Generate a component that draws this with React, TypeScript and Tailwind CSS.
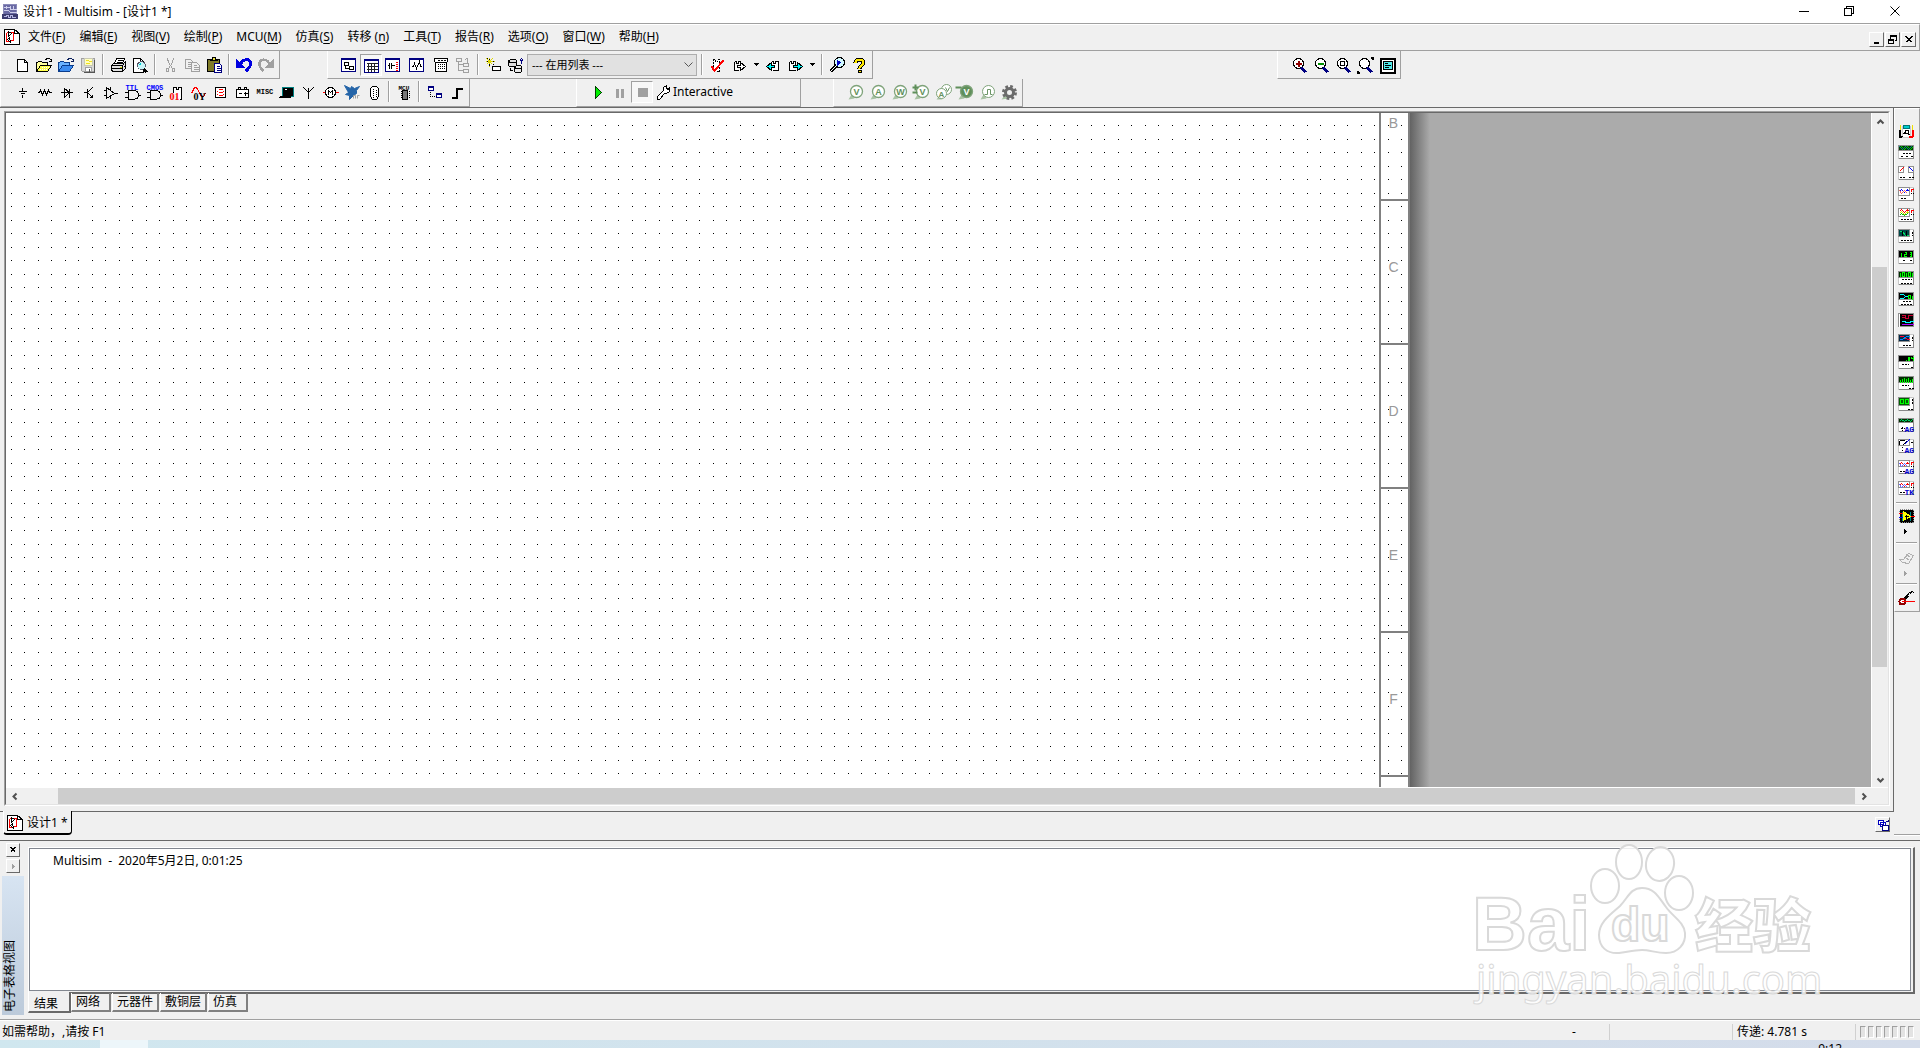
import type { ReactNode } from "react";

/* ---------- icon helpers ---------- */

// 16px grid shifted by half a pixel, so whole coordinates are pixel centres
const Pic = ({ children, w = 16, h = 16, smooth = false }: { children: ReactNode; w?: number; h?: number; smooth?: boolean }) => (
    <svg
        width={w}
        height={h}
        viewBox={`-0.5 -0.5 ${w} ${h}`}
        fill="none"
        stroke="#000"
        shapeRendering={smooth ? "auto" : "crispEdges"}
        className="shrink-0 overflow-visible"
        aria-hidden="true"
    >
        {children}
    </svg>
);

const ToolButton = ({ label, children, pressed = false }: { label: string; children: ReactNode; pressed?: boolean }) => (
    <button
        type="button"
        aria-label={label}
        className={
            pressed
                ? "w-[22px] h-[22px] shrink-0 flex items-center justify-center bg-[#f7f7f7] border border-t-[#a0a0a0] border-l-[#a0a0a0] border-r-white border-b-white"
                : "w-[22px] h-[22px] shrink-0 flex items-center justify-center"
        }
    >
        {children}
    </button>
);

const Divider = () => <div className="w-0.5 h-[21px] mx-[3px] shrink-0 border-l border-l-[#a0a0a0] border-r border-r-white"></div>;

const Caret = () => (
    <button type="button" aria-label="更多" className="w-3 h-[22px] flex items-center justify-center">
        <Pic w={5} h={3}><path d="M0 0h4l-2 2z" fill="#000" /></Pic>
    </button>
);

const Toolbar = ({ children, className = "" }: { children: ReactNode; className?: string }) => (
    <div className={`h-7 flex items-center pl-[10px] pr-0.5 border-l border-l-white border-r border-r-[#a0a0a0] border-b border-b-[#a0a0a0] ${className}`}>
        {children}
    </div>
);

const icons = {
    newFile: <Pic><path d="M3 2h7l3 3v9H3zM10 2v3h3" fill="#fff" /></Pic>,
    open: (
        <Pic>
            <path d="M0 13V5h1l1-1h3l1 1h5v3" fill="#ffff9c" />
            <path d="M0 14l4-6h11l-4 6z" fill="#ffff4a" />
            <path d="M3 12h8M5 10h8" stroke="#fff" strokeDasharray="1 1" />
            <path d="M9 3l1-2h3l2 2M15 1v3h-3" />
        </Pic>
    ),
    samples: (
        <Pic>
            <path d="M0 13V5h1l1-1h3l1 1h5v3" fill="#6cb4ff" stroke="#0a3c8c" />
            <path d="M0 14l4-6h11l-4 6z" fill="#3c8cf0" stroke="#0a3c8c" />
            <path d="M9 3l1-2h3l2 2M15 1v3h-3" stroke="#0a1e5a" />
        </Pic>
    ),
    save: (
        <Pic>
            <path d="M1 1h13v13H2l-1-1z" fill="#d8d8d8" stroke="#a0a0a0" />
            <path d="M4 1h8v7H4z" fill="#ffffc0" stroke="#c8c8b4" />
            <path d="M5 3h3M8 4h3M5 6h4" stroke="#f0e020" />
            <path d="M5 10h6v4H5z" fill="#fff" stroke="#a0a0a0" />
            <path d="M9 11v3M14 2v13M3 15h11" stroke="#555" />
        </Pic>
    ),
    print: (
        <Pic>
            <path d="M4 6l2-5h8l-2 5z" fill="#fff" />
            <path d="M7 3h5M6 5h5" />
            <path d="M1 8l2-2h10l2-2v7l-3 3H2l-1-2z" fill="#e0e0e0" />
            <path d="M1 8h11v5M1 11h11M13 6v1M15 8l-2 2" />
            <path d="M9 10h2" stroke="#d0d000" />
        </Pic>
    ),
    preview: (
        <Pic>
            <path d="M1 1h7l3 3v11H1z" fill="#fff" />
            <path d="M8 1v3h3" />
            <circle cx="9" cy="8" r="4" fill="#c8f4f8" stroke="#556" />
            <path d="M7 7l2-1" stroke="#0cc" />
            <path d="M12 11l3 4M11 12l3 3" strokeWidth="1.5" />
        </Pic>
    ),
    cut: (
        <Pic>
            <g stroke="#a0a0a0">
                <path d="M5 1l1 4 4 6M11 1l-1 4-4 6" />
                <path d="M4 11h2v3H4zM10 11h2v3h-2z" />
            </g>
        </Pic>
    ),
    copy: (
        <Pic>
            <g stroke="#a0a0a0">
                <path d="M1 2h5l2 2v7H1zM3 5h3M3 7h4M3 9h4" />
                <path d="M7 5h5l3 3v6H7z" fill="#f0f0f0" />
                <path d="M9 8h3M9 10h5M9 12h5" />
            </g>
        </Pic>
    ),
    paste: (
        <Pic>
            <path d="M1 2h12v12H1z" fill="#807c28" />
            <path d="M4 3h7l-1-1H9V0H6v2H5z" fill="#e8e040" />
            <path d="M8 6h5l2 2v7H8z" fill="#fff" stroke="#000080" />
            <path d="M10 9h3M10 11h4M10 13h4" stroke="#000080" />
        </Pic>
    ),
    undo: (
        <Pic>
            <path d="M4 7c2-6 9-6 10-2 1 4-2 6-5 9" stroke="#0000e0" strokeWidth="3" />
            <path d="M0 2v8h8z" fill="#0000e0" stroke="#0000e0" />
        </Pic>
    ),
    redo: (
        <Pic>
            <path d="M11 7c-2-6-9-6-10-2-1 4 2 6 4 9" stroke="#a0a0a0" strokeWidth="2.5" />
            <path d="M15 2v8H7z" fill="#a0a0a0" stroke="#a0a0a0" />
        </Pic>
    ),
    toolbox: (
        <Pic>
            <path d="M0 1h14v13H0z" fill="#fff" stroke="#000080" />
            <path d="M0 2h14" stroke="#000080" />
            <path d="M3 5h4v3H3zM4 8v3h4M8 9h4v3H8z" />
        </Pic>
    ),
    sheet: (
        <Pic>
            <path d="M1 2h14v13H1z" fill="#fff" stroke="#000080" />
            <path d="M1 3h14" stroke="#000080" />
            <path d="M3 6h11M3 9h11M3 12h11M5 5v9M8 5v9M11 5v9" stroke="#222" />
        </Pic>
    ),
    database: (
        <Pic>
            <path d="M0 1h14v13H0z" fill="#fff" stroke="#000080" />
            <path d="M0 2h14" stroke="#000080" />
            <path d="M2 8h2M4 5v6M6 5v6M6 8h3" />
            <path d="M12 4v10M11 4v10" stroke="#f00" strokeDasharray="1 1" />
        </Pic>
    ),
    grapher: (
        <Pic>
            <path d="M0 1h14v13H0z" fill="#fff" stroke="#000080" />
            <path d="M0 2h14" stroke="#000080" />
            <path d="M2 9h2l1-3 2 5 3-7 1 5h1" />
        </Pic>
    ),
    postproc: (
        <Pic>
            <path d="M1 1h13v3l-1 1v9H2V5L1 4zM2 5h11" fill="#fff" />
            <path d="M4 3h8" strokeDasharray="2 1" />
            <path d="M4 7h8M4 9h8M4 11h8" strokeDasharray="1 1" />
        </Pic>
    ),
    parent: (
        <Pic>
            <g stroke="#a0a0a0">
                <path d="M1 1h5v3H1zM3 4v9M3 7h4M3 13h4M8 6h5v3H8zM8 12h5v3H8zM11 1h1v4M9 3l2-2 2 2" />
            </g>
        </Pic>
    ),
    create: (
        <Pic>
            <path d="M4 0v9M0 4h9M1 1l6 6M7 1L1 7" stroke="#e0d800" />
            <path d="M4 1v1M4 6v2M1 4h1M7 4h1M1 1h1M7 7h1" />
            <path d="M7 9h8v4H7z" fill="#fff" />
        </Pic>
    ),
    dbManager: (
        <Pic>
            <path d="M1 3h1l1-1h5l1 1v5l-1 1H2L1 8z" fill="#ddd" />
            <path d="M1 4l2 1h5l1-1M7 9h1l1-1h4l1 1v5l-1 1H8l-1-1zM7 10l2 1h4l1-1M3 10v3h2" fill="#e8e8e8" />
            <path d="M14 6V2M12 4l2-3 2 3" stroke="#000080" />
        </Pic>
    ),
    check: (
        <Pic>
            <path d="M4 12V2h2v2h2V2h2v12H7" strokeDasharray="2 1" fill="#fff" />
            <path d="M2 9l3 4 9-10" stroke="#f00" strokeWidth="2" />
        </Pic>
    ),
    transfer: (
        <Pic>
            <path d="M3 4v9h4M3 4h2v2h2V4h2v4" fill="#fff" />
            <path d="M6 8h3V5l5 4-5 4v-3H6z" fill="#fff" />
        </Pic>
    ),
    backAnnotate: (
        <Pic>
            <path d="M6 4h2v2h2V4h3v9H7" fill="#fff" />
            <path d="M9 8H6V5L1 9l5 4v-3h3z" fill="#0ff" />
        </Pic>
    ),
    forward: (
        <Pic>
            <path d="M2 4v9h6M2 4h2v2h2V4h2v5" fill="#fff" />
            <path d="M6 8h4V5l5 4-5 4v-3H6z" fill="#0ff" />
        </Pic>
    ),
    find: (
        <Pic>
            <circle cx="10" cy="5" r="5" fill="#d0f8ff" />
            <path d="M8 3l3 2-3 3z" fill="#0000c0" stroke="#0000c0" />
            <path d="M6 9l-5 5" strokeWidth="3" />
            <path d="M6 9l-5 5" stroke="#fff" />
        </Pic>
    ),
    help: (
        <Pic>
            <path d="M4 5c0-4 8-4 8 0 0 3-4 3-4 6" stroke="#000" strokeWidth="4" />
            <path d="M4 5c0-4 8-4 8 0 0 3-4 3-4 6" stroke="#ffe800" strokeWidth="2" />
            <path d="M7 13h3v2H7z" fill="#ffe800" />
        </Pic>
    ),
    ground: <Pic><path d="M8 3v4M4 7h8M6 9h4M8 10v3" /></Pic>,
    resistor: <Pic><path d="M1 8h2l1-2 2 4 2-4 2 4 2-4 1 2h2" /></Pic>,
    diode: <Pic><path d="M2 8h12M6 4v9l5-5zM11 4v9" /></Pic>,
    transistor: <Pic><path d="M3 8h4M7 4v9M12 3L7 8l5 5M12 10v3H9" /></Pic>,
    opamp: <Pic><path d="M4 3v11l8-5zM1 6h3M1 11h3M12 9h3M8 2v4M8 11v3" /></Pic>,
    ttl: (
        <Pic>
            <text x="1" y="5" stroke="none" fill="#0000ff" className="text-[7px] font-bold font-['Liberation_Mono']">TTL</text>
            <path d="M4 6h5c7 1 7 8 0 9H4zM0 8h4M0 13h4M13 11h3" />
        </Pic>
    ),
    cmos: (
        <Pic>
            <text x="0" y="5" stroke="none" fill="#0000ff" className="text-[7px] font-bold font-['Liberation_Mono']">CMOS</text>
            <path d="M4 6h5c7 1 7 8 0 9H4zM0 8h4M0 13h4M13 11h3" />
        </Pic>
    ),
    digital: (
        <Pic>
            <path d="M5 8V3h3v2h2V3h3v12h-2" fill="#fff" />
            <text x="1" y="15" stroke="none" fill="#f00" className="text-[10px] font-bold font-['Liberation_Serif']">01</text>
        </Pic>
    ),
    mixed: (
        <Pic>
            <path d="M1 9l3-6h2l5 9h2l2-3" stroke="#f00" />
            <text x="3" y="15" stroke="none" fill="#000" className="text-[10px] font-bold font-['Liberation_Serif']">0Y</text>
        </Pic>
    ),
    indicator: (
        <Pic>
            <path d="M3 3h10v10H3z" fill="#fff" />
            <path d="M6 5h4M6 8h4M6 11h4M5 6v1M11 6v1M5 9v1M11 9v1" stroke="#f00" />
        </Pic>
    ),
    power: <Pic><path d="M2 5h12v8H2zM4 5V3h2v2M10 5V3h2v2M4 9h3M9 9h4M11 7v4" fill="#fff" /></Pic>,
    misc: <Pic><text x="0" y="9" stroke="none" fill="#000" className="text-[7px] font-bold font-['Liberation_Mono']">MISC</text></Pic>,
    peripherals: (
        <Pic>
            <path d="M4 3h11v9H4z" fill="#000" stroke="#008080" />
            <path d="M1 12h11M0 13h12" />
            <path d="M6 5h2" stroke="#fff" />
        </Pic>
    ),
    rf: <Pic><path d="M8 3v11M3 3l5 5 5-5" /></Pic>,
    electromech: (
        <Pic>
            <path d="M0 8h3M13 8h3" stroke="#f00" />
            <circle cx="8" cy="8" r="5" fill="#fff" />
            <path d="M6 10V6l2 2 2-2v4" />
        </Pic>
    ),
    ni: (
        <Pic smooth>
            <path d="M0 1l6 3 1-2 3 2 5-2-3 4v3l-3 2-4 4 0-4-4-1 3-2z" fill="#2464a8" stroke="#2464a8" />
            <path d="M9 14v-3h2v3M13 14v-3h2" stroke="#a0a0a0" />
        </Pic>
    ),
    connector: (
        <Pic>
            <path d="M6 2h4l2 2v8l-2 3H6l-2-3V4z" fill="#fff" />
            <path d="M7 4v9M10 5v7" strokeDasharray="1 1" />
        </Pic>
    ),
    mcu: (
        <Pic>
            <text x="2" y="5" stroke="none" fill="#000" className="text-[6px] font-bold font-['Liberation_Mono']">MCU</text>
            <path d="M6 6h5v9H6z" fill="#777" />
            <path d="M4 7h10M4 9h10M4 11h10M4 13h10" strokeDasharray="1 7" />
        </Pic>
    ),
    hierarchy: (
        <Pic>
            <path d="M2 2h5v4H2zM10 9h5v4h-5z" fill="#fff" stroke="#000080" />
            <path d="M2 3h5M10 10h5" stroke="#000080" />
            <path d="M4 7v5h6" strokeDasharray="1 1" />
        </Pic>
    ),
    bus: <Pic><path d="M3 13h5V4h6" strokeWidth="2" /></Pic>,
    zoomPage: (
        <Pic>
            <path d="M1 1h14v14H1z" fill="#fff" strokeWidth="2" />
            <path d="M4 4h9v8H4z" fill="#50e8e8" />
            <path d="M5 6h3M5 8h6M5 10h4" />
        </Pic>
    ),
    schematic: (
        <Pic>
            <path d="M0 0h10l5 4v11H0z" fill="#fff" />
            <path d="M10 0v4h5" />
            <path d="M2 3h7v8H6M2 3v9h3" stroke="#f00" />
            <path d="M4 2l3 2-3 3zM5 8l-2 2 3 3z" fill="#fff" />
        </Pic>
    ),
};

const magnifier = (inner: ReactNode) => (
    <Pic>
        <circle cx="7" cy="6" r="5" fill="#fff" />
        <path d="M10 10l4 5" stroke="#000080" strokeWidth="3" />
        {inner}
    </Pic>
);

const probe = (letter: string, filled = false, sign = "") => (
    <Pic smooth>
        <path d="M1 15l3-5 3 4z" fill="#a9c3a4" stroke="none" />
        <circle cx="9" cy="7" r="6" fill={filled ? "#5f8f5a" : "#fff"} stroke="#7fa37a" strokeWidth="1.3" />
        <text x="9" y="10" textAnchor="middle" stroke="none" fill={filled ? "#fff" : "#5f8f5a"} className="text-[9px] font-bold font-['Liberation_Sans']">{letter}</text>
        {sign && <path d={sign} stroke="#5f8f5a" strokeWidth="2" />}
    </Pic>
);

/* ---------- data ---------- */

const menus = [
    ["文件(", "F"], ["编辑(", "E"], ["视图(", "V"], ["绘制(", "P"], ["MCU(", "M"], ["仿真(", "S"],
    ["转移 (", "n"], ["工具(", "T"], ["报告(", "R"], ["选项(", "O"], ["窗口(", "W"], ["帮助(", "H"],
];

const components: [string, ReactNode][] = [
    ["放置源", icons.ground], ["放置基本", icons.resistor], ["放置二极管", icons.diode], ["放置晶体管", icons.transistor],
    ["放置模拟", icons.opamp], ["放置TTL", icons.ttl], ["放置CMOS", icons.cmos], ["放置其他数字", icons.digital],
    ["放置混合", icons.mixed], ["放置指示器", icons.indicator], ["放置功率元器件", icons.power], ["放置其他", icons.misc],
    ["放置高级外设", icons.peripherals], ["放置RF", icons.rf], ["放置机电式", icons.electromech], ["放置NI元器件", icons.ni],
    ["放置连接器", icons.connector],
];

const probes: [string, ReactNode][] = [
    ["电压探针", probe("V")],
    ["电流探针", probe("A")],
    ["功率探针", probe("W")],
    ["差分电压探针", probe("V", false, "M-1 3h6M2 0v6M-1 8h5")],
    ["电压和电流探针", (
        <Pic smooth key="va">
            <path d="M1 15l3-4 3 4z" fill="#a9c3a4" stroke="none" />
            <circle cx="11" cy="5" r="5" fill="#fff" stroke="#7fa37a" />
            <circle cx="6" cy="9" r="5" fill="#fff" stroke="#7fa37a" />
            <text x="6" y="12" textAnchor="middle" stroke="none" fill="#6a9465" className="text-[8px] font-bold font-['Liberation_Sans']">A</text>
            <path d="M10 3l2 4 2-4" stroke="#6a9465" />
        </Pic>
    )],
    ["参考探针", probe("V", true, "M-2 3h6")],
    ["数字探针", (
        <Pic smooth key="dig">
            <path d="M1 15l3-5 3 4z" fill="#a9c3a4" stroke="none" />
            <circle cx="9" cy="7" r="6" fill="#fff" stroke="#7fa37a" />
            <path d="M5 10h3V5h3v5h2" stroke="#6a9465" />
        </Pic>
    )],
    ["探针设置", (
        <Pic smooth key="set">
            <path d="M0 15l4-5 3 4z" fill="#a9c3a4" stroke="none" />
            <circle cx="8" cy="8" r="6" stroke="#6b6b6b" strokeWidth="3" strokeDasharray="2.6 2.1" />
            <circle cx="8" cy="8" r="4" stroke="#6b6b6b" strokeWidth="3" />
        </Pic>
    )],
];

// screen, main trace and its colour, foot terminals
type Instrument = { name: string; screen: string; width?: number; height?: number; traces: [string, string][]; foot?: string; tag?: string; side?: boolean };

const instruments: Instrument[] = [
    { name: "函数发生器", screen: "#003c00", height: 5, traces: [["M1 3l2-2 3 3 3-3 3 3 2-2", "#00d000"], ["M1 1l3 3 3-3 3 3 3-3", "#0a8080"]], foot: "M4 8h8M2 11h2M7 11h2M12 11h2" },
    { name: "瓦特计", screen: "#fff", width: 5, traces: [["M1 5l4-4", "#f00"], ["M10 0h5v6h-5z", "#909090"], ["M11 1l4 4", "#00f"], ["M6 0h3", "#f0f0f0"]], foot: "M1 11h5M10 11h5" },
    { name: "示波器", screen: "#fff", width: 11, height: 8, side: true, traces: [["M1 5l2-3 3 3 3-3 1 2", "#00f"], ["M1 3l2 3 3-3 3 3", "#e66"]], foot: "M2 11h5" },
    { name: "四通道示波器", screen: "#fff", width: 11, height: 8, side: true, traces: [["M1 3l2-2 3 3 3-3 1 2", "#f00"], ["M1 5l2-2 3 3 3-3 1 2", "#dd0"], ["M1 7l2-2 3 2 3-2 1 1", "#0b0"]], foot: "M2 11h11" },
    { name: "波特测试仪", screen: "#004848", width: 11, height: 7, traces: [["M1 2h3l3 4h3", "#0d6"], ["M4 1v5M8 1v5", "#000"]], foot: "M2 11h12M14 2v4" },
    { name: "频率计数器", screen: "#000", height: 7, traces: [["M3 2v4M6 2h2v2H6v2h2M11 2h2v4h-2M11 4h2", "#0f0"]], foot: "M4 10h3M11 10h3" },
    { name: "字发生器", screen: "#003000", traces: [["M2 1v4M4 1h2v4H4zM8 1v4M10 1h2v4h-2zM14 1v4", "#0f0"]], foot: "M3 8h10M2 12h12" },
    { name: "逻辑变换器", screen: "#000", height: 7, traces: [["M1 2h4l2 2-2 2H1M7 4h2", "#0ff"], ["M10 3h2v3h-2zM14 3v4", "#0f0"]], foot: "M4 9h9M2 12h12" },
    { name: "逻辑分析仪", screen: "#000", height: 13, traces: [["M3 2h4v3h3V2h4M3 4h3", "#c03"], ["M3 8h3l2 1h3l2-1h2", "#0ff"], ["M3 11h12", "#a0f"], ["M1 0v13", "#fff"]] },
    { name: "IV分析仪", screen: "#002848", width: 11, height: 7, traces: [["M1 2h4l4 3h2", "#f03"], ["M1 5h3l4-3h3", "#08f"]], foot: "M4 11h9M14 2v4" },
    { name: "失真分析仪", screen: "#000", height: 6, traces: [["M7 5h1M10 2h1v3h-1zM13 1v2h2M15 1v4", "#0f0"]], foot: "M3 9h7M12 12h2" },
    { name: "光谱分析仪", screen: "#003000", traces: [["M2 3v3M4 2v4M6 1v5M8 2v4M10 1v5M12 3v3M14 2v4", "#0f0"]], foot: "M3 9h7M10 12h5" },
    { name: "网络分析仪", screen: "#006000", width: 11, height: 8, traces: [["M2 2h3v4H2zM7 2h3v4H7z", "#0f0"]], foot: "M9 12h5M14 1v6" },
    { name: "Agilent函数发生器", screen: "#003000", height: 4, traces: [["M1 3l2-2 3 2 3-2 3 2 2-2", "#0c6"]], foot: "M4 8v4M2 10h4", tag: "AG" },
    { name: "Agilent万用表", screen: "#fff", width: 11, traces: [["M1 1h5M1 1v4M5 5l5-4", "#000"], ["M6 5l5-5", "#00f"]], foot: "M3 8h1M3 11h1M12 3h3", tag: "AG" },
    { name: "Agilent示波器", screen: "#fff", width: 11, side: true, traces: [["M1 5l2-3 3 3 3-3 1 2", "#f00"], ["M1 3l2 3 3-3 3 3", "#66f"]], foot: "M1 11h5", tag: "AG" },
    { name: "Tektronix示波器", screen: "#fff", width: 11, side: true, traces: [["M1 5l2-3 3 3 3-3 1 2", "#f00"], ["M1 3l2 3 3-3 3 3", "#66f"]], foot: "M1 11h5", tag: "TK" },
];

const InstrumentIcon = ({ item }: { item: Instrument }) => (
    <Pic h={14}>
        <path d="M0 0h15v13H0z" fill="#fff" stroke="#c8c8c8" />
        <path d="M15 0v13H0" stroke="#888" />
        <rect x="0" y="0" width={item.width ?? 15} height={item.height ?? 6} fill={item.screen} stroke="#909090" />
        {item.traces.map(([d, color]) => <path key={d} d={d} stroke={color} />)}
        {item.foot && <path d={item.foot} strokeDasharray="2 1" />}
        {item.side && <path d="M12 2h3M13 1v3" stroke="#f00" />}
        {item.side && <path d="M12 6h3" strokeDasharray="1 1" />}
        {item.tag && <text x="6" y="13" stroke="none" fill="#0000d0" className="text-[8px] font-bold font-['Liberation_Mono']">{item.tag}</text>}
    </Pic>
);

/* ---------- sections ---------- */

const TitleBar = () => (
    <header className="h-6 shrink-0 bg-white border-b border-[#a0a0a0] flex items-center pl-0.5">
        <Pic>
            <path d="M1 0h13v13H1z" fill="#6a6aa4" stroke="#8a8ab8" />
            <path d="M1 3h6l2 2h5M1 6h5l2 2h6M4 1v3M8 1v4M11 1v4" stroke="#d0d0ec" />
            <path d="M0 10h15v4H0z" fill="#3c3c70" stroke="#3c3c70" />
            <path d="M1 12h3v-1h2v2h2v-2h2v2h3" stroke="#b8b8e4" />
        </Pic>
        <h1 className="ml-[5px] text-[12px] whitespace-nowrap">设计1 - Multisim - [设计1 *]</h1>
        <div className="ml-auto mr-0.5 flex h-full -mt-0.5">
            <button type="button" aria-label="最小化" className="w-[46px] flex items-center justify-center">
                <Pic w={10} h={10}><path d="M0 5h10" /></Pic>
            </button>
            <button type="button" aria-label="还原" className="w-[46px] flex items-center justify-center">
                <Pic w={10} h={10}><path d="M0 2h7v7H0zM2 2V0h7v7H7" /></Pic>
            </button>
            <button type="button" aria-label="关闭" className="w-[46px] flex items-center justify-center">
                <Pic w={10} h={10} smooth><path d="M0 0l9 9M9 0L0 9" /></Pic>
            </button>
        </div>
    </header>
);

const MdiButton = ({ label, d }: { label: string; d: string }) => (
    <button type="button" aria-label={label} className="w-[15px] h-[15px] flex items-center justify-center bg-[#f0f0f0] border border-t-white border-l-white border-r-[#696969] border-b-[#696969]">
        <Pic w={9} h={9}><path d={d} /></Pic>
    </button>
);

const MenuBar = () => (
    <nav className="h-[27px] shrink-0 border-t border-t-white border-b border-b-[#a0a0a0] border-r border-r-[#a0a0a0] flex items-center pl-1 pr-[3px] pb-px">
        {icons.schematic}
        <ul className="flex gap-[14px] ml-2 whitespace-nowrap">
            {menus.map(([text, key]) => (
                <li key={text}>
                    <button type="button" className="block">{text}<span className="underline underline-offset-2">{key}</span>)</button>
                </li>
            ))}
        </ul>
        <div className="ml-auto mt-1 flex gap-px">
            <MdiButton label="最小化文档" d="M1 7h5M1 8h5" />
            <MdiButton label="还原文档" d="M0 4h5v4H0zM0 5h5M2 3V0h6v5H6M2 1h6" />
            <MdiButton label="关闭文档" d="M1 1l6 6M2 1l6 6M7 1L1 7M8 1L2 7" />
        </div>
    </nav>
);

const Toolbars = () => (
    <div className="shrink-0 border-b border-[#696969]">
        <div className="flex">
            <Toolbar>
                <ToolButton label="新建">{icons.newFile}</ToolButton>
                <ToolButton label="打开">{icons.open}</ToolButton>
                <ToolButton label="打开样本">{icons.samples}</ToolButton>
                <ToolButton label="保存">{icons.save}</ToolButton>
                <Divider />
                <ToolButton label="打印">{icons.print}</ToolButton>
                <ToolButton label="打印预览">{icons.preview}</ToolButton>
                <Divider />
                <ToolButton label="剪切">{icons.cut}</ToolButton>
                <ToolButton label="复制">{icons.copy}</ToolButton>
                <ToolButton label="粘贴">{icons.paste}</ToolButton>
                <Divider />
                <ToolButton label="撤消">{icons.undo}</ToolButton>
                <ToolButton label="重复">{icons.redo}</ToolButton>
            </Toolbar>
            <Toolbar className="ml-[47px]">
                <ToolButton label="设计工具箱">{icons.toolbox}</ToolButton>
                <ToolButton label="电子表格视图" pressed>{icons.sheet}</ToolButton>
                <ToolButton label="SPICE网表查看器">{icons.database}</ToolButton>
                <div className="flex gap-0.5 ml-0.5">
                    <ToolButton label="图示仪">{icons.grapher}</ToolButton>
                    <ToolButton label="后处理器">{icons.postproc}</ToolButton>
                </div>
                <ToolButton label="母电路图">{icons.parent}</ToolButton>
                <Divider />
                <ToolButton label="元器件向导">{icons.create}</ToolButton>
                <ToolButton label="数据库管理器">{icons.dbManager}</ToolButton>
                <div className="relative mx-px">
                    <select aria-label="在用列表" className="block w-[170px] h-[22px] appearance-none bg-[#e1e1e1] border border-[#adadad] pl-1 text-[11px] leading-5 outline-none">
                        <option>--- 在用列表 ---</option>
                    </select>
                    <div className="absolute right-1 top-2 pointer-events-none">
                        <Pic w={9} h={6} smooth><path d="M0 0l4 4 4-4" stroke="#555" /></Pic>
                    </div>
                </div>
                <Divider />
                <ToolButton label="电气法则查验">{icons.check}</ToolButton>
                <ToolButton label="转移">{icons.transfer}</ToolButton>
                <Caret />
                <ToolButton label="反向注解">{icons.backAnnotate}</ToolButton>
                <ToolButton label="正向注解">{icons.forward}</ToolButton>
                <Caret />
                <Divider />
                <ToolButton label="查找范例">{icons.find}</ToolButton>
                <ToolButton label="帮助">{icons.help}</ToolButton>
            </Toolbar>
            <Toolbar className="ml-[404px]">
                <ToolButton label="放大">{magnifier(<path d="M4 6h6M7 3v6" stroke="#900000" strokeWidth="2" />)}</ToolButton>
                <ToolButton label="缩小">{magnifier(<path d="M4 6h6" stroke="#009000" strokeWidth="2" />)}</ToolButton>
                <ToolButton label="缩放区域">{magnifier(<path d="M5 4h4v4H5z" />)}</ToolButton>
                <ToolButton label="缩放页面">{magnifier(<path d="M13 0h2v2M0 13v2h2" strokeWidth="2" />)}</ToolButton>
                <ToolButton label="全屏">{icons.zoomPage}</ToolButton>
            </Toolbar>
        </div>
        <div className="flex">
            <Toolbar className="pb-0.5">
                {components.map(([label, icon]) => <ToolButton key={label} label={label}>{icon}</ToolButton>)}
                <Divider />
                <ToolButton label="放置MCU">{icons.mcu}</ToolButton>
                <Divider />
                <ToolButton label="层次块来自文件">{icons.hierarchy}</ToolButton>
                <ToolButton label="放置总线">{icons.bus}</ToolButton>
            </Toolbar>
            <Toolbar className="ml-[106px] w-[225px] pb-0.5">
                <ToolButton label="运行"><Pic><path d="M5 2v12l6-6z" fill="#00f000" stroke="#004000" /></Pic></ToolButton>
                <ToolButton label="暂停"><Pic><path d="M5 4v9M10 4v9" stroke="#a0a0a0" strokeWidth="3" /></Pic></ToolButton>
                <ToolButton label="停止" pressed><Pic><path d="M4 4h9v8H4z" fill="#a0a0a0" stroke="#a0a0a0" /></Pic></ToolButton>
                <button type="button" className="flex items-center gap-0.5 ml-0.5">
                    <Pic><path d="M2 12l6-6V3l3-2v3l2 1 1-2v4l-3 2H9l-5 6H2z" fill="#fff" /></Pic>
                    Interactive
                </button>
            </Toolbar>
            <Toolbar className="ml-8 pb-0.5">
                {probes.map(([label, icon]) => <ToolButton key={label} label={label}>{icon}</ToolButton>)}
            </Toolbar>
        </div>
    </div>
);

const ScrollArrow = ({ label, d }: { label: string; d: string }) => (
    <button type="button" aria-label={label} className="w-4 h-4 shrink-0 flex items-center justify-center">
        <Pic w={7} h={7} smooth><path d={d} stroke="#505050" strokeWidth="2" /></Pic>
    </button>
);

const Workspace = () => (
    <div className="flex-1 min-h-0 border-r border-b border-[#696969] pt-[3px] pl-1 pr-[3px] pb-[5px] flex">
        <div className="flex-1 min-w-0 border border-t-[#a0a0a0] border-l-[#a0a0a0] border-r-white border-b-white flex">
            <div className="flex-1 min-w-0 border border-t-[#696969] border-l-[#696969] border-r-[#e3e3e3] border-b-[#e3e3e3] flex flex-col">
                <div className="flex-1 min-h-0 flex">
                    <div className="flex-1 min-w-0 bg-[#ababab] flex overflow-hidden">
                        <div className="w-[1404px] shrink-0 bg-white border-r-2 border-[#808080] grid grid-cols-1 overflow-hidden">
                            <svg className="col-start-1 row-start-1 w-full h-full" shapeRendering="crispEdges" aria-hidden="true">
                                <defs>
                                    <pattern id="dots" width="27" height="27" patternUnits="userSpaceOnUse">
                                        <path d="M5 12h1v1H5zM18 12h1v1h-1zM5 26h1v1H5zM18 26h1v1h-1z" />
                                    </pattern>
                                </defs>
                                <rect width="100%" height="100%" fill="url(#dots)" />
                            </svg>
                            <div className="col-start-1 row-start-1 ml-auto w-[29px] h-0 min-h-full border-l-2 border-[#808080] overflow-hidden">
                                <div className="-mt-14 text-center text-[14px] text-[#999] font-['Liberation_Sans',sans-serif]">
                                    {["B", "C", "D", "E", "F", ""].map((row) => (
                                        <div key={row} className="h-36 border-b-2 border-[#808080] pt-[56px] pr-0.5 leading-5">{row}</div>
                                    ))}
                                </div>
                            </div>
                        </div>
                        <div className="w-5 shrink-0 bg-linear-to-r from-[#636363] to-[#ababab]"></div>
                    </div>
                    <div className="w-[17px] shrink-0 border-l border-white flex flex-col">
                        <ScrollArrow label="向上滚动" d="M0 5l3-3 3 3" />
                        <div className="grow-[138]"></div>
                        <div className="grow-[400] mr-px bg-[#cdcdcd]"></div>
                        <div className="grow-[104]"></div>
                        <ScrollArrow label="向下滚动" d="M0 2l3 3 3-3" />
                    </div>
                </div>
                <div className="h-[17px] shrink-0 border-t border-white flex pr-[17px]">
                    <ScrollArrow label="向左滚动" d="M5 0L2 3l3 3" />
                    <div className="grow-[36]"></div>
                    <div className="grow-[1795] bg-[#cdcdcd]"></div>
                    <ScrollArrow label="向右滚动" d="M2 0l3 3-3 3" />
                </div>
            </div>
        </div>
    </div>
);

const DesignTabs = () => (
    <div className="h-7 shrink-0 flex items-start pl-[3px] pr-1">
        <button type="button" className="h-6 -mt-px pt-0.5 flex items-center gap-1 pl-[3px] pr-[3px] bg-[#f0f0f0] border-l border-l-white border-r border-b-2 border-r-black border-b-black rounded-b-sm whitespace-nowrap">
            {icons.schematic}
            设计1 *
        </button>
        <button type="button" aria-label="窗口列表" className="ml-auto mt-[5px] w-[15px] h-[15px] flex items-center justify-center border border-t-white border-l-white border-r-[#696969] border-b-[#696969]">
            <Pic w={12} h={12}>
                <path d="M1 1h5v4H1zM3 3h5v4H3z" fill="#fff" stroke="#0000c0" />
                <path d="M5 6h6v5H5z" fill="#fff" stroke="#000080" />
                <path d="M8 2h3V0" stroke="#000080" />
            </Pic>
        </button>
    </div>
);

const RightLine = () => <div className="h-0.5 w-[21px] shrink-0 border-t border-t-[#a0a0a0] border-b border-b-white"></div>;

const InstrumentBar = () => (
    <aside className="w-[26px] shrink-0 flex flex-col">
        <div className="border-t border-l border-white border-r border-r-[#a0a0a0] border-b border-b-[#a0a0a0] pt-[11px] pr-0.5 flex flex-col items-center">
            <button type="button" aria-label="万用表" className="h-[21px] flex items-center">
                <Pic h={14}>
                    <path d="M4 2h8v11H4z" fill="#fff" stroke="#ccc" />
                    <path d="M5 1h6v3H5z" fill="#0cc" stroke="#077" />
                    <path d="M2 0v5M14 0v5" stroke="#f0e000" />
                    <path d="M1 5v7l3 1" strokeWidth="2" />
                    <path d="M7 6h3v3H7zM6 8l-1 2M10 9l1 2" />
                    <path d="M14 5v7l-3 1" stroke="#f00" strokeWidth="2" />
                </Pic>
            </button>
            {instruments.map((item) => (
                <button type="button" key={item.name} aria-label={item.name} className="h-[21px] flex items-center">
                    <InstrumentIcon item={item} />
                </button>
            ))}
            <div className="h-1"></div>
            <RightLine />
            <button type="button" aria-label="LabVIEW仪器" className="h-[23px] flex items-center">
                <Pic h={14}>
                    <path d="M1 0h14v13H1z" fill="#000" stroke="#888" strokeDasharray="1 1" />
                    <path d="M4 2v9M12 2v9" stroke="#088" />
                    <path d="M0 4h4" stroke="#f00" />
                    <path d="M0 8h4" stroke="#00f" />
                    <path d="M5 2v9l7-4z" fill="#ff0" stroke="#ff0" />
                    <path d="M6 7h4M8 5v4" />
                    <path d="M12 7h4" stroke="#f00" />
                </Pic>
            </button>
            <button type="button" aria-label="更多LabVIEW仪器" className="h-[9px] flex items-center">
                <Pic w={4} h={5}><path d="M0 0v4l2-2z" fill="#000" /></Pic>
            </button>
            <div className="h-1.5"></div>
            <RightLine />
            <button type="button" aria-label="NI ELVISmx仪器" className="h-[27px] flex items-center">
                <Pic h={14}><path d="M1 8h4l5-6 5 2-5 8-6-1zM7 6l4 3M8 3l4 3" stroke="#b0b0b0" /></Pic>
            </button>
            <button type="button" aria-label="更多NI ELVISmx仪器" className="h-[5px] flex items-center">
                <Pic w={4} h={5}><path d="M0 0v4l2-2z" fill="#a0a0a0" stroke="#a0a0a0" /></Pic>
            </button>
            <div className="h-[7px]"></div>
            <RightLine />
            <button type="button" aria-label="电流探针" className="h-[26px] flex items-center">
                <Pic h={14}>
                    <path d="M9 4l2-3 1 1 1-2 3 1" />
                    <path d="M6 7l4-3" strokeWidth="3" />
                    <circle cx="4" cy="10" r="3" fill="#fff" stroke="#900000" strokeWidth="2" />
                    <path d="M3 10h13" stroke="#f00" />
                </Pic>
            </button>
        </div>
        <div className="mt-auto mb-1 h-0.5 border-t border-t-[#a0a0a0] border-b border-b-white"></div>
    </aside>
);

const Spreadsheet = () => (
    <section className="h-[179px] shrink-0 border-b border-[#a0a0a0] flex">
        <div className="w-7 shrink-0 flex flex-col pt-0.5 pl-0.5 pr-1 pb-1">
            <button type="button" aria-label="关闭视图" className="ml-1 w-[14px] h-[14px] flex items-center justify-center border border-t-white border-l-white border-r-[#696969] border-b-[#696969]">
                <Pic w={6} h={6}><path d="M0 0l5 5M5 0L0 5M1 0l4 4M4 0L0 4" /></Pic>
            </button>
            <button type="button" aria-label="展开视图" className="ml-1 mt-0.5 w-[14px] h-[14px] flex items-center justify-center border border-t-white border-l-white border-r-[#696969] border-b-[#696969]">
                <Pic w={3} h={5}><path d="M0 0v4l2-2z" fill="#a0a0a0" stroke="#a0a0a0" /></Pic>
            </button>
            <div className="flex-1 mt-[3px] bg-linear-to-b from-[#d7e4f2] to-[#bccada] flex items-end pb-[3px]">
                <h2 className="text-[12px] leading-4 rotate-180 [writing-mode:vertical-rl] [text-orientation:sideways]">电子表格视图</h2>
            </div>
        </div>
        <div className="flex-1 min-w-0 flex flex-col pt-1.5 pr-[5px]">
            <div className="h-[147px] border-t border-l border-t-white border-l-white border-r-2 border-b-2 border-r-[#696969] border-b-[#696969] flex">
                <div className="flex-1 mr-0.5 mb-px bg-white border border-[#828790] pl-[23px] pt-1 leading-4 whitespace-pre">
                    Multisim  -  2020年5月2日, 0:01:25
                </div>
            </div>
            <div className="flex items-start -mt-px leading-4" role="tablist">
                <button type="button" role="tab" aria-selected="true" className="h-[21px] w-[43px] -mt-px bg-[#f0f0f0] border-l border-l-white border-r-2 border-b-2 border-r-[#696969] border-b-[#696969] pt-1 pl-[5px] text-left">结果</button>
                {["网络", "元器件", "敷铜层", "仿真"].map((tab) => (
                    <button type="button" role="tab" aria-selected="false" key={tab} className="h-[19px] min-w-10 pt-px px-1 mr-px border-l border-l-white border-r-2 border-b-2 border-r-[#808080] border-b-[#808080] text-left">{tab}</button>
                ))}
            </div>
        </div>
    </section>
);

const StatusBar = () => (
    <footer className="h-5 shrink-0 border-t border-white flex items-center whitespace-nowrap pt-0.5">
        <div className="flex-1 pl-0.5">如需帮助，,请按 F1</div>
        <div className="w-[38px] h-4 leading-4 border-r border-[#d0d0d0]">-</div>
        <div className="w-[123px] h-4 border-r border-[#d0d0d0]"></div>
        <div className="w-[123px] h-4 pl-1 leading-4 border-r border-[#d0d0d0]">传递: 4.781 s</div>
        <div className="w-16 pl-1 flex gap-0.5">
            {[0, 1, 2, 3, 4, 5, 6].map((n) => (
                <div key={n} className="w-1.5 h-3 bg-[#e3e3e3] border border-t-[#a0a0a0] border-l-[#a0a0a0] border-r-white border-b-white"></div>
            ))}
        </div>
    </footer>
);

const Taskbar = () => (
    <div className="h-2 shrink-0 overflow-hidden bg-linear-to-r from-[#d0e7ef] to-[#d4dcea] flex">
        <div className="ml-[100px] w-12 bg-[#edf6fa]"></div>
        <div className="ml-auto mr-[78px] pt-[3px] leading-3">9:12</div>
    </div>
);

const Watermark = () => (
    <svg width="360" height="175" className="absolute right-[90px] bottom-[33px] pointer-events-none" fill="#fff" fillOpacity="0.85" stroke="#d9d9d9" strokeWidth="2" aria-hidden="true">
        <text x="2" y="110" className="text-[76px] font-bold font-['Liberation_Sans']">Bai</text>
        <ellipse cx="135" cy="46" rx="14" ry="17" />
        <ellipse cx="159" cy="22" rx="13" ry="17" />
        <ellipse cx="190" cy="24" rx="14" ry="17" transform="rotate(8 190 24)" />
        <ellipse cx="209" cy="53" rx="14" ry="17" />
        <path d="M172 48c-12 0-14 10-22 18-9 8-21 16-21 29 0 12 8 19 20 18 8-1 15-3 23-3s14 3 24 3c12 0 20-9 19-20-1-11-12-16-19-26-7-9-11-19-24-19z" />
        <text x="141" y="101" className="text-[48px] font-bold font-['Liberation_Sans']">du</text>
        <text x="225" y="107" className="text-[58px] font-black font-['Noto_Sans_CJK_SC']">经验</text>
        <text x="6" y="154" strokeWidth="1" className="text-[40px] font-['Noto_Sans']">jingyan.baidu.com</text>
    </svg>
);

const App = () => {
    return (
        <div className="relative h-screen overflow-hidden flex flex-col bg-[#f0f0f0] text-black text-[12px] leading-4 font-['Noto_Sans','Noto_Sans_CJK_SC',sans-serif]">
            <TitleBar />
            <MenuBar />
            <Toolbars />
            <main className="flex-1 min-h-0 flex border-b border-[#696969]">
                <div className="flex-1 min-w-0 flex flex-col">
                    <Workspace />
                    <DesignTabs />
                </div>
                <InstrumentBar />
            </main>
            <Spreadsheet />
            <StatusBar />
            <Taskbar />
            <Watermark />
        </div>
    );
};

export default App;
